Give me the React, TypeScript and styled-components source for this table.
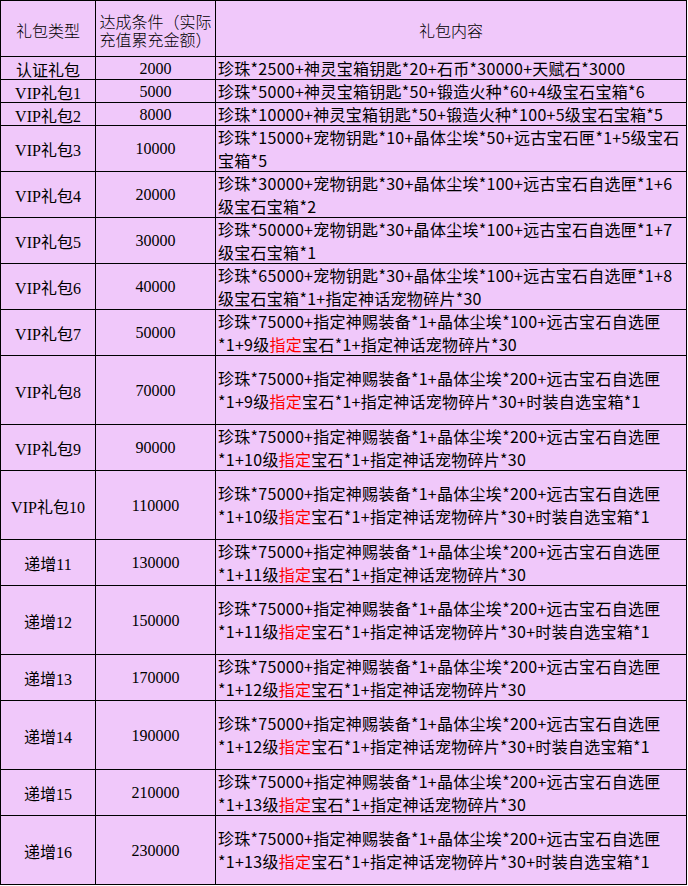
import React from "react";
import styled, { createGlobalStyle } from "styled-components";

const Global = createGlobalStyle`
  html, body { margin: 0; padding: 0; background: #ffffff; }
  body { font-family: "Noto Sans CJK SC", sans-serif; }
`;

const Table = styled.div`
  width: 687px;
  box-sizing: border-box;
  border-top: 1px solid #000;
  border-left: 1px solid #000;
  background: #f0c8fa;
  color: #000;
`;

const Row = styled.div<{ $h: number }>`
  display: grid;
  grid-template-columns: 95px 120px 471px;
  height: ${(p) => p.$h}px;
`;

const Cell = styled.div`
  box-sizing: border-box;
  border-right: 1px solid #000;
  border-bottom: 1px solid #000;
  display: flex;
  align-items: center;
  overflow: hidden;
`;

const NameCell = styled(Cell)`
  justify-content: center;
  font-family: "Liberation Serif", "Noto Sans CJK SC", serif;
  font-size: 16px;
  white-space: nowrap;
  padding-top: 1px;
`;

const AmountCell = styled(NameCell)``;

const HeadCell = styled(Cell)`
  flex-direction: column;
  justify-content: center;
  text-align: center;
  font-family: "Noto Sans CJK SC", sans-serif;
  font-size: 16px;
  line-height: 18px;
  font-weight: 300;
  padding-top: 2px;
  white-space: nowrap;
`;

const HeadLine = styled.div`
  height: 18px;
`;

const ContentCell = styled(Cell)`
  flex-direction: column;
  align-items: flex-start;
  justify-content: center;
  padding-left: 2px;
  font-family: "Noto Sans CJK SC", sans-serif;
  font-size: 16px;
  line-height: 23px;
  white-space: nowrap;
  letter-spacing: 0.28px;
`;

const Line = styled.div`
  height: 23px;
`;

const Hot = styled.span`
  color: #ff0000;
`;

type Seg = string | { red: string };
type Item = { name: string; amount: string; h: number; lines: Seg[][] };

const A = "珍珠*75000+指定神赐装备*1+晶体尘埃*";
const ship = "宝石*1+指定神话宠物碎片*30";
const fashion = "+时装自选宝箱*1";

const mk = (
  name: string,
  amount: string,
  dust: string,
  lv: string,
  extra: boolean
): Item => ({
  name,
  amount,
  h: extra ? 69 : 46,
  lines: [
    [A + dust + "+远古宝石自选匣"],
    ["*1+" + lv + "级", { red: "指定" }, ship + (extra ? fashion : "")],
  ],
});

const rows: Item[] = [
  { name: "认证礼包", amount: "2000", h: 23, lines: [["珍珠*2500+神灵宝箱钥匙*20+石币*30000+天赋石*3000"]] },
  { name: "VIP礼包1", amount: "5000", h: 23, lines: [["珍珠*5000+神灵宝箱钥匙*50+锻造火种*60+4级宝石宝箱*6"]] },
  { name: "VIP礼包2", amount: "8000", h: 23, lines: [["珍珠*10000+神灵宝箱钥匙*50+锻造火种*100+5级宝石宝箱*5"]] },
  { name: "VIP礼包3", amount: "10000", h: 46, lines: [["珍珠*15000+宠物钥匙*10+晶体尘埃*50+远古宝石匣*1+5级宝石"], ["宝箱*5"]] },
  { name: "VIP礼包4", amount: "20000", h: 46, lines: [["珍珠*30000+宠物钥匙*30+晶体尘埃*100+远古宝石自选匣*1+6"], ["级宝石宝箱*2"]] },
  { name: "VIP礼包5", amount: "30000", h: 46, lines: [["珍珠*50000+宠物钥匙*30+晶体尘埃*100+远古宝石自选匣*1+7"], ["级宝石宝箱*1"]] },
  { name: "VIP礼包6", amount: "40000", h: 46, lines: [["珍珠*65000+宠物钥匙*30+晶体尘埃*100+远古宝石自选匣*1+8"], ["级宝石宝箱*1+指定神话宠物碎片*30"]] },
  mk("VIP礼包7", "50000", "100", "9", false),
  mk("VIP礼包8", "70000", "200", "9", true),
  mk("VIP礼包9", "90000", "200", "10", false),
  mk("VIP礼包10", "110000", "200", "10", true),
  mk("递增11", "130000", "200", "11", false),
  mk("递增12", "150000", "200", "11", true),
  mk("递增13", "170000", "200", "12", false),
  mk("递增14", "190000", "200", "12", true),
  mk("递增15", "210000", "200", "13", false),
  mk("递增16", "230000", "200", "13", true),
];

export default function App() {
  return (
    <>
      <Global />
      <Table>
        <Row $h={56}>
          <HeadCell>
            <HeadLine>礼包类型</HeadLine>
          </HeadCell>
          <HeadCell>
            <HeadLine>达成条件（实际</HeadLine>
            <HeadLine>充值累充金额）</HeadLine>
          </HeadCell>
          <HeadCell>
            <HeadLine>礼包内容</HeadLine>
          </HeadCell>
        </Row>
        {rows.map((r) => (
          <Row key={r.name} $h={r.h}>
            <NameCell>{r.name}</NameCell>
            <AmountCell>{r.amount}</AmountCell>
            <ContentCell>
              {r.lines.map((segs, i) => (
                <Line key={i}>
                  {segs.map((s, j) =>
                    typeof s === "string" ? (
                      <React.Fragment key={j}>{s}</React.Fragment>
                    ) : (
                      <Hot key={j}>{s.red}</Hot>
                    )
                  )}
                </Line>
              ))}
            </ContentCell>
          </Row>
        ))}
      </Table>
    </>
  );
}
